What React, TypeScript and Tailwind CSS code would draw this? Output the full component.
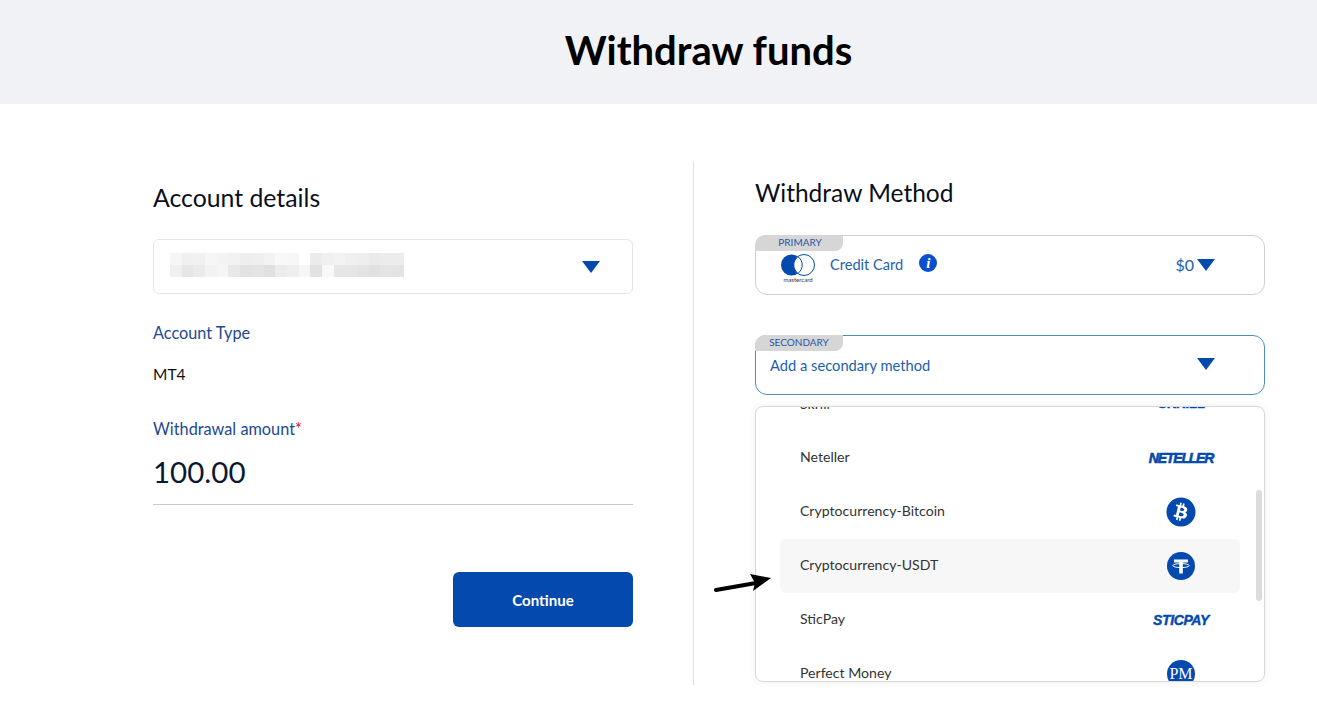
import { FaBitcoin } from "react-icons/fa";

const mosaic = [
  ["#f6f6f6", "#f0f0f0", "#f1f1f1", "#f6f6f6", "#f4f4f4", "#f2f2f2", "#eeeeee", "#efefef", "#f3f3f3", "#f8f8f8", "#f7f7f7", "#ffffff", "#ebebeb", "#f0f0f0", "#f3f3f3", "#efefef", "#eeeeee", "#eaeaea", "#ececec", "#ececec"],
  ["#f0f0f0", "#e6e6e6", "#ebebeb", "#f2f2f2", "#f5f5f5", "#e8e8e8", "#e2e2e2", "#e4e4e4", "#e0e0e0", "#ececec", "#efefef", "#f6f6f6", "#e2e2e2", "#f8f8f8", "#e6e6e6", "#e6e6e6", "#e3e3e3", "#e1e1e1", "#e4e4e4", "#e3e3e3"],
];

const Caret = ({ className }: { className: string }) => (
  <svg viewBox="0 0 18 12" className={className} fill="#0449ae">
    <path d="M0 0H18L9 12Z" />
  </svg>
);

const TetherIcon = () => (
  <svg viewBox="0 0 28 28" className="h-7 w-7">
    <circle cx="14" cy="14" r="14" fill="#0449ae" />
    <path d="M7 7.5H21V10.5H15.8V21.5H12.2V10.5H7Z" fill="white" />
    <ellipse cx="14" cy="13.6" rx="8.2" ry="2" fill="none" stroke="white" strokeWidth="1" />
  </svg>
);

const rows = [
  { name: "Neteller", logo: <span className="font-['Liberation_Sans',sans-serif] text-[14px] font-bold italic tracking-[-1.2px] text-[#0449ae] [-webkit-text-stroke:0.6px_#0449ae]">NETELLER</span> },
  { name: "Cryptocurrency-Bitcoin", logo: <FaBitcoin className="text-[30px] text-[#0449ae]" /> },
  { name: "Cryptocurrency-USDT", logo: <TetherIcon />, active: true },
  { name: "SticPay", logo: <span className="font-['Liberation_Sans',sans-serif] text-[14px] font-bold italic tracking-[-0.4px] text-[#0449ae] [-webkit-text-stroke:0.4px_#0449ae]">STICPAY</span> },
  {
    name: "Perfect Money",
    logo: (
      <span className="flex h-7 w-7 items-center justify-center rounded-full bg-[#0449ae] font-['Liberation_Serif',serif] text-[16px] text-white">
        PM
      </span>
    ),
  },
];

export default function App() {
  return (
    <div className="relative h-[721px] w-[1317px] overflow-hidden bg-white font-['Lato',sans-serif]">
      {/* Title band */}
      <div className="flex h-[104px] items-center justify-center bg-[#f1f2f6] pb-[4px] pl-[100px]">
        <h1 className="text-[40px] font-bold text-black">Withdraw funds</h1>
      </div>

      <div className="mt-[57px] flex pl-[153px]">
        {/* Account details */}
        <div className="w-[480px] pt-[22px]">
          <h2 className="text-[24.8px] leading-[30px] text-[#0b0f1a]">Account details</h2>
          <div className="mt-[26px] flex h-[55px] items-center justify-between rounded-md border border-[#e6e6e6] pl-[16px] pr-[32px]">
            <div className="mb-[3px] flex flex-col blur-[0.5px]">
              {mosaic.map((row, i) => (
                <div key={i} className="flex">
                  {row.map((c, j) => (
                    <div key={j} className="h-[12px] w-[11.7px]" style={{ backgroundColor: c }} />
                  ))}
                </div>
              ))}
            </div>
            <Caret className="h-[12px] w-[18px]" />
          </div>
          <div className="mt-[28px] text-[16.3px] leading-[22px] text-[#1c4a8f]">Account Type</div>
          <div className="mt-[19px] text-[15.5px] leading-[22px] text-[#111]">MT4</div>
          <div className="mt-[33px] text-[16.3px] leading-[22px] text-[#1c4a8f]">
            Withdrawal amount<span className="text-[#d11]">*</span>
          </div>
          <div className="mt-[11px] border-b border-[#c9c9c9] pb-[11px] text-[29.5px] leading-[42px] text-[#0b1a30]">100.00</div>
          <div className="mt-[67px] flex justify-end">
            <button className="h-[55px] w-[180px] rounded-md bg-[#0449ae] pt-[1px] text-[15px] font-bold text-white">Continue</button>
          </div>
        </div>

        {/* Divider */}
        <div className="ml-[60px] h-[524px] w-px bg-[#e2e2e2]" />

        {/* Withdraw method */}
        <div className="relative ml-[61px] w-[510px]">
          <h2 className="mt-[17px] text-[24.5px] leading-[30px] text-[#0b0f1a]">Withdraw Method</h2>

          <div className="relative mt-[27px] flex h-[60px] items-center rounded-[12px] border border-[#cfcfcf] pl-[24px] pr-[49px]">
            <div className="absolute -left-px -top-px flex h-[16px] w-[88px] items-center justify-center rounded-bl-none rounded-br-[8px] rounded-tl-[10px] bg-[#d6d6d6] pb-[1px] pl-[2px] text-[10px] text-[#2a55a5]">
              PRIMARY
            </div>
            <div className="mt-[6px] flex w-[36px] flex-col items-center">
              <svg viewBox="0 0 36 22" className="h-[22px] w-[36px]">
                <circle cx="11.5" cy="11" r="10.5" fill="#0449ae" />
                <circle cx="24" cy="11" r="10.5" fill="white" stroke="#0449ae" strokeWidth="1" />
                <path d="M18 2.6a10.5 10.5 0 0 1 0 16.8a10.5 10.5 0 0 1 0-16.8Z" fill="white" stroke="#0449ae" strokeWidth="1" />
              </svg>
              <span className="text-[6px] leading-[7px] text-[#333]">mastercard</span>
            </div>
            <span className="ml-[14px] text-[14.6px] text-[#1c5fb0]">Credit Card</span>
            <span className="mb-[4px] ml-[16px] flex h-[18px] w-[18px] items-center justify-center rounded-full bg-[#0b4fd0] font-['Liberation_Serif',serif] text-[15px] font-bold italic leading-none text-white">
              i
            </span>
            <span className="ml-auto text-[16px] text-[#1c5fb0]">$0</span>
            <Caret className="ml-[3px] h-[12px] w-[18px]" />
          </div>

          <div className="relative mt-[40px] flex h-[60px] items-center justify-between rounded-[12px] border border-[#4a8cc4] pl-[14px] pr-[49px]">
            <div className="absolute -left-px -top-px flex h-[16px] w-[88px] items-center justify-center rounded-br-[8px] rounded-tl-[10px] bg-[#d6d6d6] pb-[1px] text-[10px] text-[#2a55a5]">
              SECONDARY
            </div>
            <span className="text-[14.7px] text-[#1c5fb0]">Add a secondary method</span>
            <Caret className="mb-[2px] h-[12px] w-[18px]" />
          </div>

          {/* Open method list */}
          <div className="absolute left-0 top-[245px] h-[276px] w-[510px] overflow-hidden rounded-[8px] border border-[#d8d8d8] bg-white shadow-[0_0_8px_rgba(40,60,110,0.07)]">
            <div className="flex h-[24px] -translate-y-[15px] items-center justify-between pl-[44px] pr-[59px]">
              <span className="text-[14.1px] text-[#333]">Skrill</span>
              <span className="font-['Liberation_Sans',sans-serif] text-[13px] font-bold text-[#0449ae] [-webkit-text-stroke:0.5px_#0449ae]">SKRILL</span>
            </div>
            <div className="-mt-[1px] px-[24px] pt-[1px]">
              {rows.map((row) => (
                <div
                  key={row.name}
                  className={`flex h-[54px] items-center rounded-[6px] pl-[20px] ${row.active ? "bg-[#f7f7f7]" : ""}`}
                >
                  <span className="mb-[2px] text-[14.1px] text-[#333]">{row.name}</span>
                  <div className="ml-auto mr-[19px] flex w-[80px] items-center justify-center">{row.logo}</div>
                </div>
              ))}
            </div>
            <div className="absolute right-[2px] top-[83px] h-[111px] w-[6px] rounded-full bg-[#dcdcdc]" />
          </div>

          {/* Annotation arrow */}
          <svg viewBox="0 0 58 22" className="absolute -left-[41px] top-[411px] h-[22px] w-[58px]">
            <path d="M2 18L42 11" stroke="black" strokeWidth="4" strokeLinecap="round" />
            <path d="M36 2L57 6L39 19L41 11Z" fill="black" />
          </svg>
        </div>
      </div>
    </div>
  );
}
